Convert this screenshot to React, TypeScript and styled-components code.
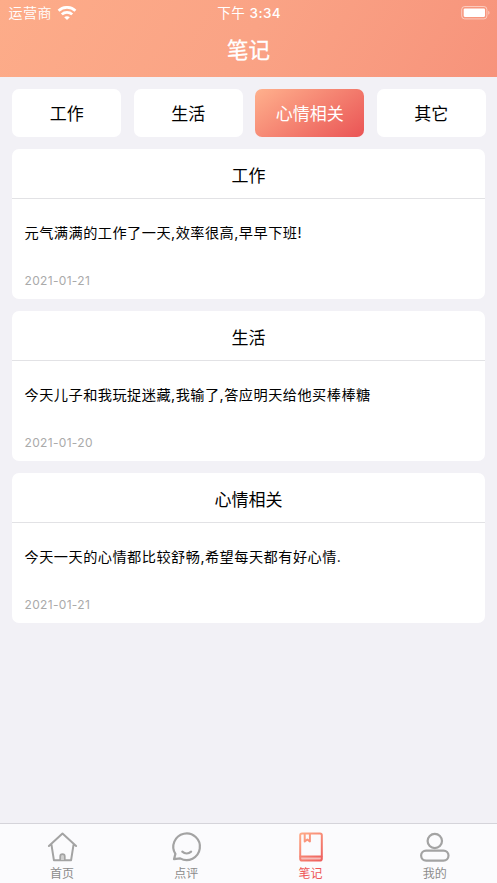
import React from "react";
import styled, { createGlobalStyle } from "styled-components";

const GlobalStyle = createGlobalStyle`
  * { box-sizing: border-box; }
  body {
    margin: 0;
    background: #f2f1f6;
    font-family: Inter, "Noto Sans CJK SC", sans-serif;
    color: #000;
  }
`;

const Screen = styled.div`
  display: flex;
  flex-direction: column;
  width: 497px;
  height: 883px;
  overflow: hidden;
  background: #f2f1f6;
`;

const Header = styled.header`
  height: 77px;
  flex: none;
  color: #fff;
  background: linear-gradient(120deg, #fdac89 0%, #faa385 50%, #f7937b 100%);
`;

const StatusBar = styled.div`
  display: grid;
  grid-template-columns: 1fr auto 1fr;
  align-items: center;
  height: 25px;
  padding: 0 7px 0 8.5px;
  font-size: 14px;
  line-height: 25px;
`;

const Carrier = styled.div`
  display: flex;
  align-items: center;
  gap: 5px;
  font-weight: 350;
  line-height: 24px;
  letter-spacing: 0.5px;
`;

const Clock = styled.div`
  padding-top: 1px;
  font-size: 13.5px;
  font-weight: 400;
  letter-spacing: 0.45px;
  white-space: pre;
`;

const ClockDigits = styled.span`
  font-weight: 500;
`;

const Power = styled.div`
  display: flex;
  justify-content: flex-end;
`;

const Title = styled.h1`
  margin: 0;
  height: 50px;
  font-size: 21.5px;
  font-weight: 400;
  line-height: 51px;
  text-align: center;
  -webkit-text-stroke: 0.3px #fff;
`;

const Filters = styled.nav`
  display: grid;
  grid-template-columns: repeat(4, 109.3px);
  column-gap: 12.25px;
  padding: 12px 0 12px 12px;
`;

const Filter = styled.button<{ $active?: boolean }>`
  height: 48px;
  padding: 1px 0 0;
  border: 0;
  border-radius: 7px;
  font: 400 17px/48px Inter, "Noto Sans CJK SC", sans-serif;
  color: ${(p) => (p.$active ? "#fff" : "#000")};
  background: ${(p) =>
    p.$active ? "linear-gradient(145deg, #ffb18d 0%, #ea5455 100%)" : "#fff"};
`;

const Notes = styled.main`
  display: flex;
  flex: 1;
  flex-direction: column;
  gap: 12px;
  padding: 0 12px;
`;

const Card = styled.article`
  display: flex;
  flex-direction: column;
  height: 150px;
  border-radius: 7px;
  background: #fff;
`;

const CardTitle = styled.h2`
  margin: 0;
  height: 50px;
  border-bottom: 1px solid #e2e2e5;
  font-size: 17px;
  font-weight: 400;
  line-height: 54px;
  text-align: center;
`;

const CardText = styled.p`
  margin: 23px 12.5px 0;
  font-size: 14.2px;
  line-height: 22px;
  letter-spacing: 0.47px;
  white-space: nowrap;
`;

const CardDate = styled.time`
  margin: 29px 12.5px 0;
  font-size: 12px;
  line-height: 16px;
  letter-spacing: 0.33px;
  color: #aaa;
`;

const TabBar = styled.footer`
  display: grid;
  grid-template-columns: repeat(4, 1fr);
  flex: none;
  height: 60px;
  border-top: 1px solid #d5d4da;
  background: #fbfbfd;
`;

const Tab = styled.div<{ $active?: boolean }>`
  display: flex;
  flex-direction: column;
  align-items: center;
  padding-top: 7px;
  font-size: 12px;
  line-height: 18px;
  color: ${(p) => (p.$active ? "#ee5555" : "#8b8b8b")};
  svg { display: block; margin-bottom: 2px; }
`;

const WifiIcon = () => (
  <svg width="20" height="15" viewBox="0 0 20 15" fill="none" stroke="#fff" strokeWidth="2.7">
    <path d="M1.6 4.7C6.2.2 13.8.2 18.4 4.7" />
    <path d="M4.8 8.4c2.9-2.8 7.5-2.8 10.4 0" />
    <path d="M10 14.1 7.2 11.3c1.5-1.4 4.1-1.4 5.6 0Z" fill="#fff" stroke="none" />
  </svg>
);

const BatteryIcon = () => (
  <svg width="30" height="14" viewBox="0 0 30 14">
    <rect x="1.7" y=".5" width="25.2" height="12.4" rx="3" fill="none" stroke="#fff" strokeOpacity=".5" />
    <rect x="3.7" y="2.5" width="21.3" height="8.4" rx="1.1" fill="#fff" />
    <path d="M28.4 4.7v4c1.4-.7 1.4-3.3 0-4Z" fill="#fff" fillOpacity=".6" />
  </svg>
);

const iconProps = {
  width: 32,
  height: 32,
  viewBox: "0 0 32 32",
  fill: "none",
  stroke: "#a3a3a3",
  strokeWidth: 2,
  strokeLinecap: "round" as const,
  strokeLinejoin: "round" as const,
};

const HomeIcon = () => (
  <svg {...iconProps}>
    <path d="M2.9 15 16.5 2.6 30.1 15M5.5 13.8l2.4 15.4h17.2l2.4-15.4" />
    <path d="M14.2 29v-3.6a2.3 2.3 0 0 1 4.6 0V29" fill="#d0d0d0" strokeWidth="1.7" />
  </svg>
);

const ChatIcon = () => (
  <svg {...iconProps} strokeWidth={2.2}>
    <path d="M5.4 22.9A13.3 13.3 0 1 1 10.2 27.4L4 28.2Z" />
    <path d="M12.3 20.7c2.5 2.1 6.3 2.1 8.8 0" />
  </svg>
);

const NotebookIcon = () => (
  <svg {...iconProps} stroke="url(#notebook-stroke)">
    <defs>
      <linearGradient id="notebook-stroke" x1="4" y1="2" x2="28" y2="30" gradientUnits="userSpaceOnUse">
        <stop stopColor="#ffad89" />
        <stop offset="1" stopColor="#ed5c5c" />
      </linearGradient>
    </defs>
    <path d="M6 26h20v3.2H6Z" fill="#f18379" fillOpacity=".5" stroke="none" />
    <rect x="5.2" y="2.5" width="21.6" height="27" rx="1.8" />
    <path d="M5.5 25.5h21M9.7 3v7.5l2.6-2 2.6 2V3" />
  </svg>
);

const ProfileIcon = () => (
  <svg {...iconProps} strokeWidth={2.2}>
    <circle cx="15.8" cy="10" r="7.2" />
    <rect x="2.1" y="19.6" width="27.4" height="10" rx="5" />
  </svg>
);

const filters = ["工作", "生活", "心情相关", "其它"];
const notes = [
  { title: "工作", text: "元气满满的工作了一天,效率很高,早早下班!", date: "2021-01-21" },
  { title: "生活", text: "今天儿子和我玩捉迷藏,我输了,答应明天给他买棒棒糖", date: "2021-01-20" },
  { title: "心情相关", text: "今天一天的心情都比较舒畅,希望每天都有好心情.", date: "2021-01-21" },
];
const tabs = [
  { label: "首页", Icon: HomeIcon },
  { label: "点评", Icon: ChatIcon },
  { label: "笔记", Icon: NotebookIcon },
  { label: "我的", Icon: ProfileIcon },
];

export default function App() {
  return (
    <Screen>
      <GlobalStyle />
      <Header>
        <StatusBar>
          <Carrier>运营商<WifiIcon /></Carrier>
          <Clock>下午 <ClockDigits>3:34</ClockDigits></Clock>
          <Power><BatteryIcon /></Power>
        </StatusBar>
        <Title>笔记</Title>
      </Header>
      <Filters>
        {filters.map((name) => (
          <Filter key={name} $active={name === "心情相关"}>{name}</Filter>
        ))}
      </Filters>
      <Notes>
        {notes.map((note) => (
          <Card key={note.title}>
            <CardTitle>{note.title}</CardTitle>
            <CardText>{note.text}</CardText>
            <CardDate>{note.date}</CardDate>
          </Card>
        ))}
      </Notes>
      <TabBar>
        {tabs.map(({ label, Icon }) => (
          <Tab key={label} $active={label === "笔记"}>
            <Icon />
            {label}
          </Tab>
        ))}
      </TabBar>
    </Screen>
  );
}
